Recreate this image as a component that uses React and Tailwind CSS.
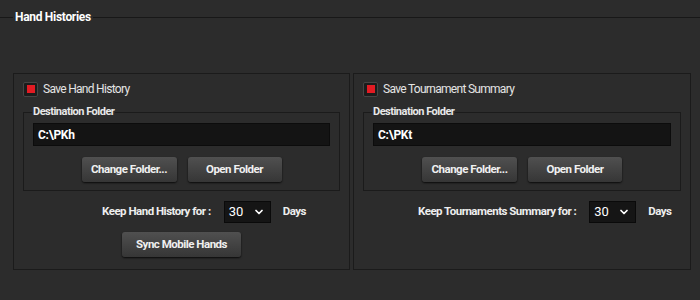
import { ChevronDown } from 'lucide-react'

const font = { fontFamily: 'Roboto, sans-serif' }

function Checkbox() {
  return (
    <span className="flex h-[15px] w-[15px] items-center justify-center rounded-[2px] border border-[#454545] bg-[#1c1c1c]">
      <span className="h-[8px] w-[8px] bg-[#e31b23]" />
    </span>
  )
}

function Btn({ children, className = '' }) {
  return (
    <button
      className={`h-[25px] rounded-[3px] bg-gradient-to-b from-[#505050] to-[#363636] text-[11.5px] font-bold tracking-[-0.5px] text-[#f0f0f0] shadow-[0_1px_2px_rgba(0,0,0,0.8)] ${className}`}
    >
      {children}
    </button>
  )
}

function Select() {
  return (
    <div className="flex h-[22px] w-[47px] items-center justify-between border border-[#0a0a0a] bg-[#151515] pl-[4px] pr-[5px] text-[13px] text-white">
      <span>30</span>
      <ChevronDown size={12} strokeWidth={3.5} />
    </div>
  )
}

function Panel({ label, path, keepLabel, keepPad, showSync }) {
  return (
    <div className="flex h-[197px] flex-col border border-[#1b1b1b]">
      <div className="flex items-center gap-[5px] pl-[9px] pt-[6px]">
        <Checkbox />
        <span className="whitespace-nowrap text-[12px] tracking-[-0.7px] text-[#e4e4e4]">{label}</span>
      </div>
      <fieldset className="mx-[9px] mt-[6px] border border-[#1b1b1b] pb-[8px]">
        <legend className="ml-[8px] px-[1px] text-[11px] font-bold leading-[16px] tracking-[-0.5px] text-[#e8e8e8]">
          Destination Folder
        </legend>
        <div className="mx-[9px] mt-[3px] flex h-[23px] items-center border border-[#0c0c0c] bg-[#141414] pl-[4px] text-[12px] font-bold tracking-[-0.3px] text-white">
          {path}
        </div>
        <div className="mt-[11px] flex justify-center gap-[11px]">
          <Btn className="w-[95px]">Change Folder...</Btn>
          <Btn className="w-[94px]">Open Folder</Btn>
        </div>
      </fieldset>
      <div className={`mt-[10px] flex items-center whitespace-nowrap ${keepPad}`}>
        <span className="text-[11.5px] font-bold tracking-[-0.5px] text-[#eeeeee]">{keepLabel}</span>
        <span className="ml-[13px]">
          <Select />
        </span>
        <span className="ml-[12px] text-[11.5px] font-bold tracking-[-0.5px] text-[#eeeeee]">Days</span>
      </div>
      {showSync && (
        <div className="mt-[9px] flex justify-center">
          <Btn className="w-[119px]">Sync Mobile Hands</Btn>
        </div>
      )}
    </div>
  )
}

export default function App() {
  return (
    <div className="h-[300px] w-[700px] overflow-hidden bg-[#2c2c2c]" style={font}>
      <div className="flex items-center pt-[9px]">
        <div className="h-px w-[13px] bg-[#181818]" />
        <span className="px-[2px] text-[12px] font-bold leading-[16px] tracking-[-0.3px] text-white">Hand Histories</span>
        <div className="h-px flex-1 bg-[#181818]" />
      </div>
      <div className="mt-[48px] flex gap-[3px] pl-[13px] pr-[9px]">
        <div className="w-[337px]">
          <Panel
            label="Save Hand History"
            path="C:\PKh"
            keepLabel="Keep Hand History for :"
            keepPad="pl-[88px]"
            showSync
          />
        </div>
        <div className="flex-1">
          <Panel
            label="Save Tournament Summary"
            path="C:\PKt"
            keepLabel="Keep Tournaments Summary for :"
            keepPad="pl-[64px]"
          />
        </div>
      </div>
    </div>
  )
}
